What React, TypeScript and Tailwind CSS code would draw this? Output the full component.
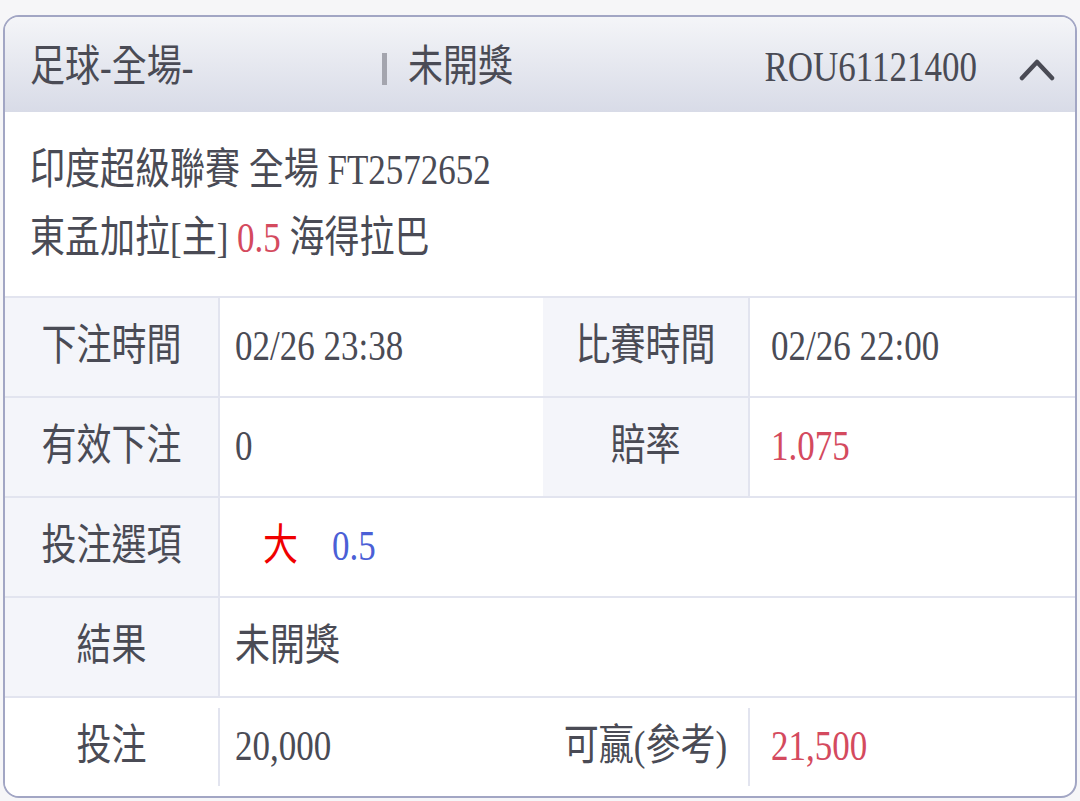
const tall = 'inline-block scale-y-[1.22]';

function Chevron() {
  return (
    <svg width="36" height="26" viewBox="0 0 36 26" className="shrink-0">
      <path d="M3 22 L18 6 L33 22" fill="none" stroke="#4a4b55" strokeWidth="4.5" strokeLinecap="round" strokeLinejoin="round" />
    </svg>
  );
}

function Label({ text, last }: { text: string; last?: boolean }) {
  return (
    <div className={`flex items-center justify-center ${last ? 'bg-white' : 'bg-[#f4f5fa]'}`}>
      <span className={tall}>{text}</span>
    </div>
  );
}

function Divider({ last }: { last?: boolean }) {
  return (
    <div className="flex items-center">
      <div className={`w-[2px] bg-[#e2e4ef] ${last ? 'h-[78px]' : 'h-full'}`} />
    </div>
  );
}

export default function App() {
  return (
    <div className="min-h-screen bg-[#f6f6f8] pt-[15px] pl-[3px] text-[#4a4b55] font-['Liberation_Serif','Noto_Sans_CJK_TC',serif] text-[35px]">
      <div className="w-[1074px] rounded-[16px] border-2 border-[#a2a6c4] overflow-hidden bg-white">
        {/* Header */}
        <div className="h-[95px] flex items-center pt-[8px] pl-[25px] pr-[20px] bg-linear-to-b from-[#f4f5f8] to-[#d8dbe7]">
          <div className="w-[352px]">
            <span className={tall}>足球-全場-</span>
          </div>
          <div className="w-[5px] h-[32px] bg-[#a4a5ae]" />
          <div className="ml-[21px] flex-1">
            <span className={tall}>未開獎</span>
          </div>
          <span className={tall}>ROU61121400</span>
          <div className="ml-[42px]">
            <Chevron />
          </div>
        </div>

        {/* Match info */}
        <div className="h-[184px] pt-[25px] pl-[25px] leading-[68px]">
          <div><span className={tall}>印度超級聯賽 全場 FT2572652</span></div>
          <div>
            <span className={tall}>
              東孟加拉[主] <span className="text-[#d44a5e]">0.5</span> 海得拉巴
            </span>
          </div>
        </div>

        {/* Rows */}
        <div className="grid grid-cols-[213px_2px_323px_205px_2px_1fr] border-t-2 border-[#e2e4ef] h-[100px]">
          <Label text="下注時間" />
          <Divider />
          <div className="flex items-center pl-[15px]"><span className={tall}>02/26 23:38</span></div>
          <Label text="比賽時間" />
          <Divider />
          <div className="flex items-center pl-[21px]"><span className={tall}>02/26 22:00</span></div>
        </div>

        <div className="grid grid-cols-[213px_2px_323px_205px_2px_1fr] border-t-2 border-[#e2e4ef] h-[100px]">
          <Label text="有效下注" />
          <Divider />
          <div className="flex items-center pl-[15px]"><span className={tall}>0</span></div>
          <Label text="賠率" />
          <Divider />
          <div className="flex items-center pl-[21px]"><span className={`${tall} text-[#d44a5e]`}>1.075</span></div>
        </div>

        <div className="grid grid-cols-[213px_2px_1fr] border-t-2 border-[#e2e4ef] h-[100px]">
          <Label text="投注選項" />
          <Divider />
          <div className="flex items-center pl-[43px] gap-[34px]">
            <span className={`${tall} text-[#f00000]`}>大</span>
            <span className={`${tall} text-[#4b5fd6]`}>0.5</span>
          </div>
        </div>

        <div className="grid grid-cols-[213px_2px_1fr] border-t-2 border-[#e2e4ef] h-[100px]">
          <Label text="結果" />
          <Divider />
          <div className="flex items-center pl-[15px]"><span className={tall}>未開獎</span></div>
        </div>

        <div className="grid grid-cols-[213px_2px_323px_205px_2px_1fr] border-t-2 border-[#e2e4ef] h-[100px]">
          <Label text="投注" last />
          <Divider last />
          <div className="flex items-center pl-[15px]"><span className={tall}>20,000</span></div>
          <Label text="可贏(參考)" last />
          <Divider last />
          <div className="flex items-center pl-[21px]"><span className={`${tall} text-[#d44a5e]`}>21,500</span></div>
        </div>
      </div>
    </div>
  );
}
